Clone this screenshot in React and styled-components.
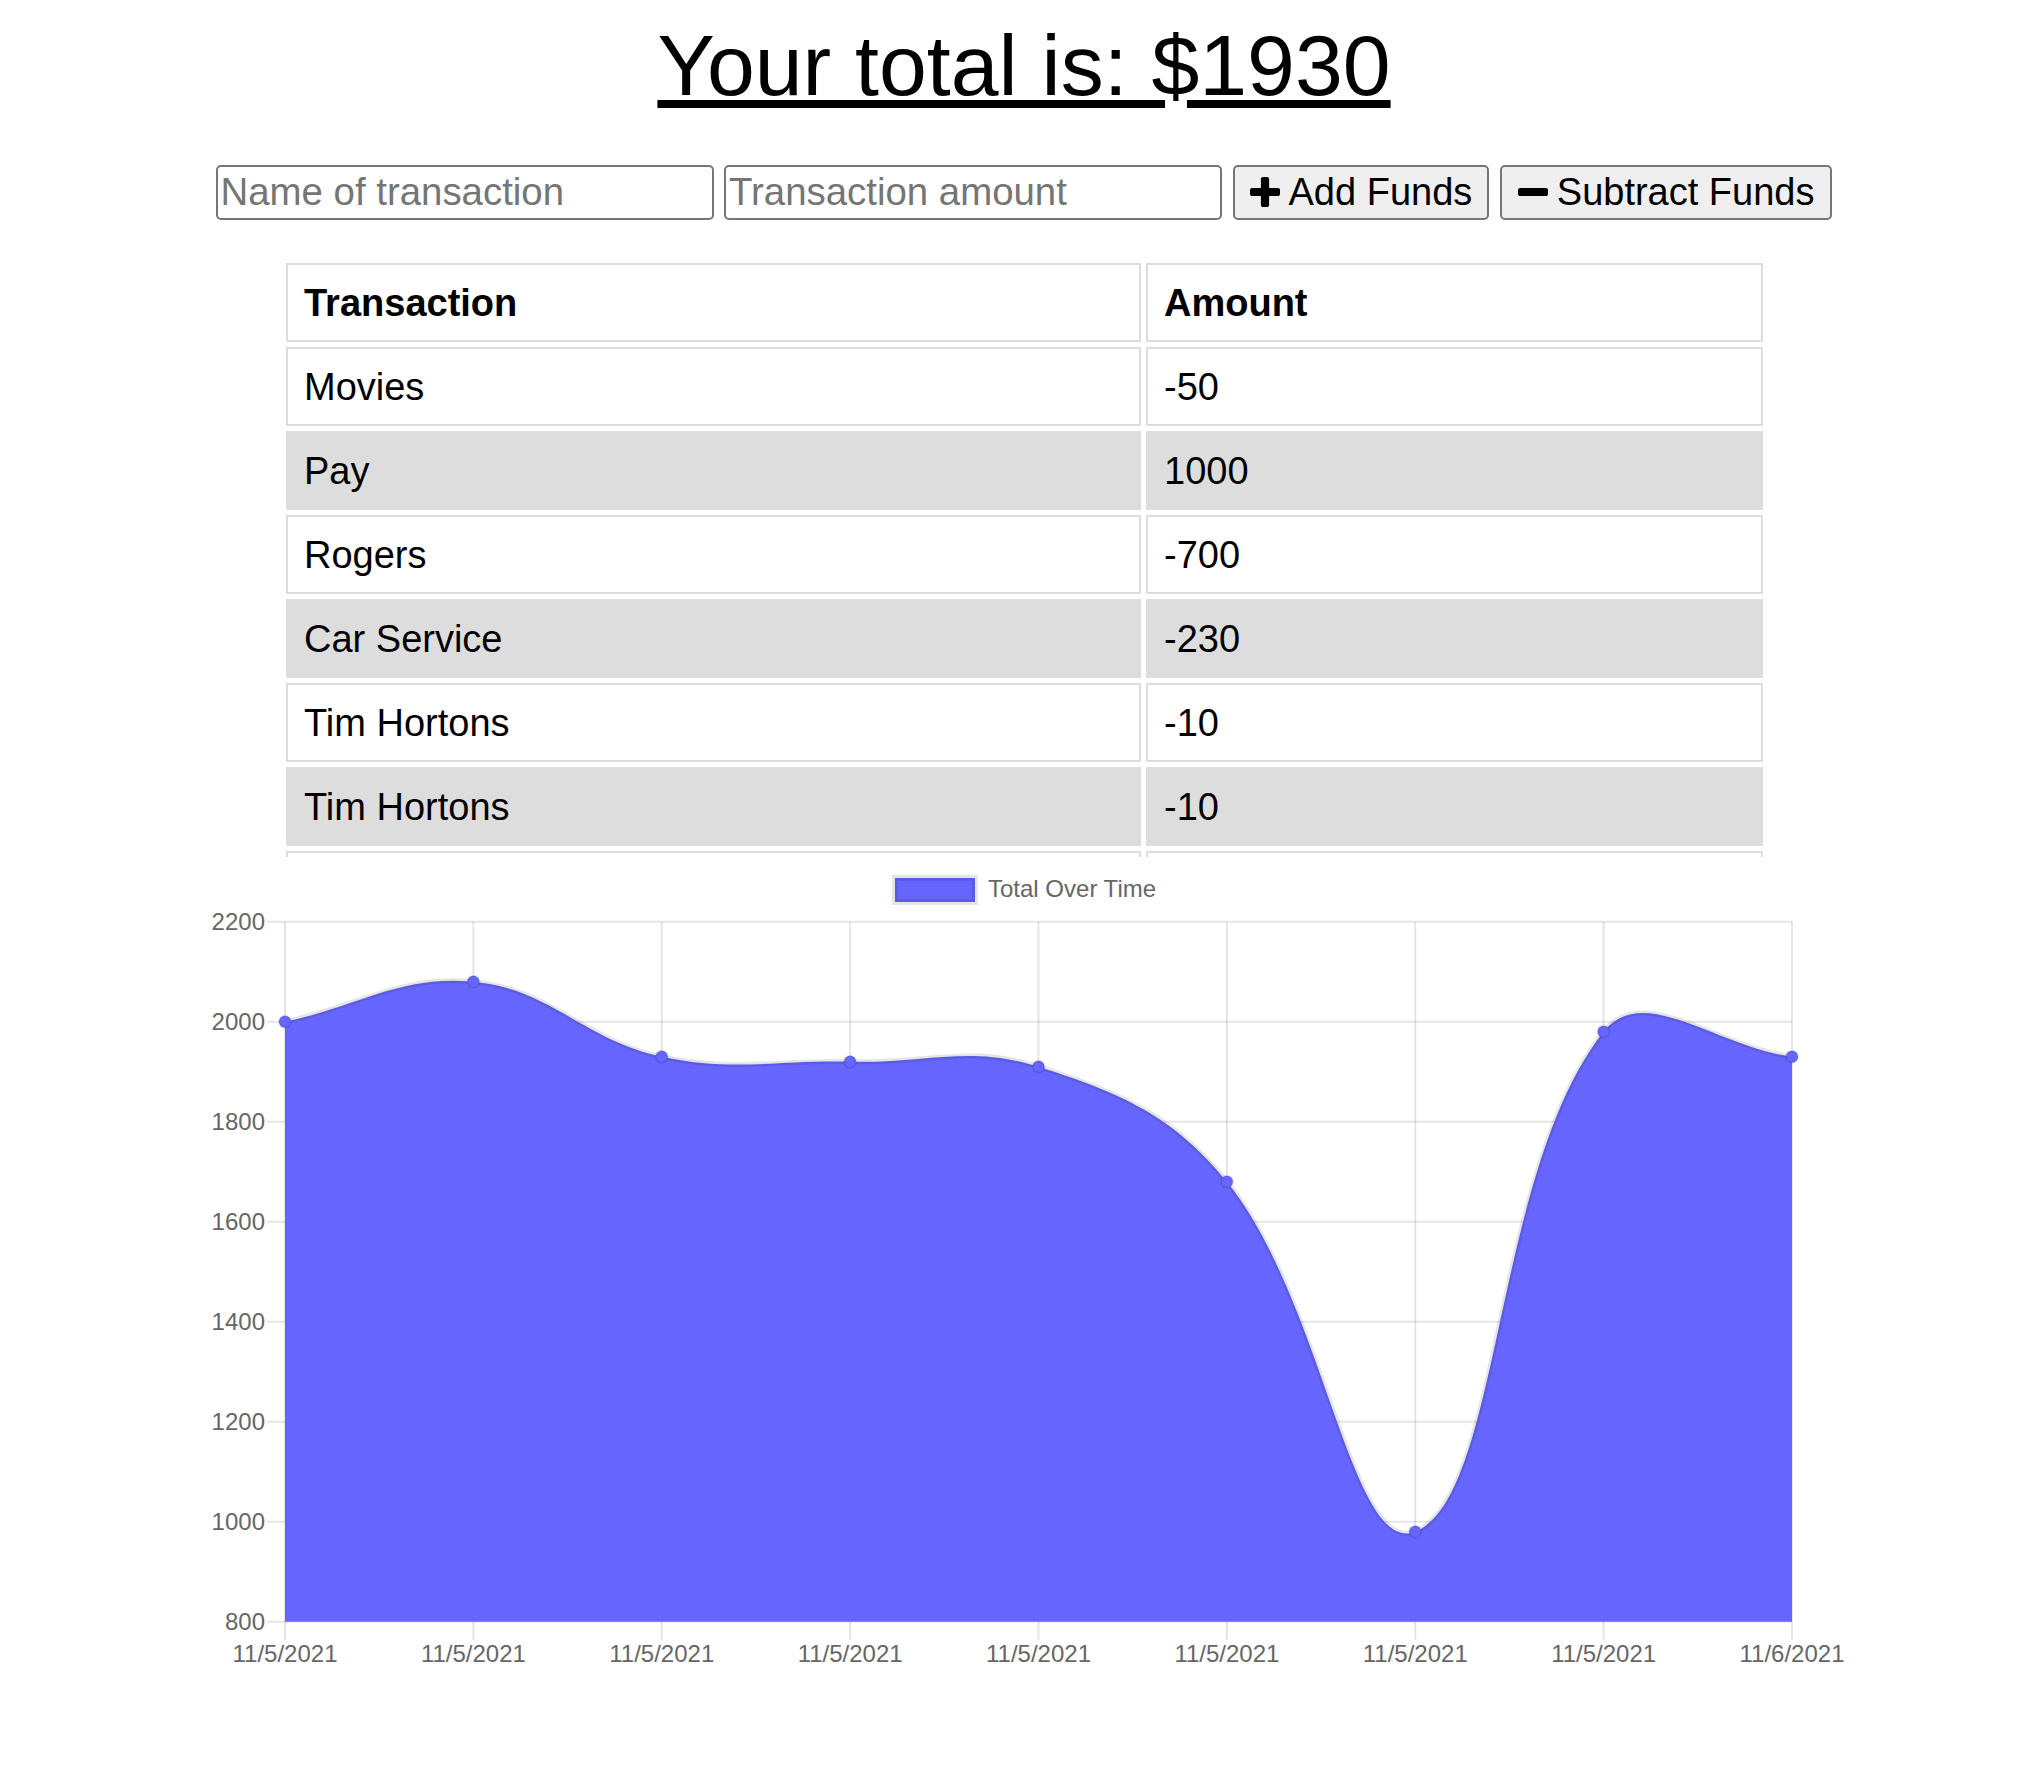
import React from 'react'
import styled, { createGlobalStyle } from 'styled-components'

const GlobalStyle = createGlobalStyle`
  * { box-sizing: border-box; }
  body {
    margin: 0;
    background: #fff;
    font-family: "Liberation Sans", Arial, sans-serif;
  }
`

const transactions = [
  { name: 'Movies', value: -50 },
  { name: 'Pay', value: 1000 },
  { name: 'Rogers', value: -700 },
  { name: 'Car Service', value: -230 },
  { name: 'Tim Hortons', value: -10 },
  { name: 'Tim Hortons', value: -10 },
  { name: 'Groceries', value: -150 },
  { name: 'Refund', value: 80 },
  { name: 'Savings', value: 2000 },
]

const VALUES = [2000, 2080, 1930, 1920, 1910, 1680, 980, 1980, 1930]
const LABELS = [...Array(8).fill('11/5/2021'), '11/6/2021']
const TICKS = [2200, 2000, 1800, 1600, 1400, 1200, 1000, 800]

// plot area, page coordinates
const LEFT = 285
const RIGHT = 1792
const TOP = 921.7
const BOTTOM = 1621.7

const xAt = (i) => LEFT + (i * (RIGHT - LEFT)) / (VALUES.length - 1)
const yAt = (v) => BOTTOM - ((v - 800) * (BOTTOM - TOP)) / 1400

const clamp = (v, a, b) => Math.max(a, Math.min(b, v))

// same spline as chart.js (tension 0.4)
function curvePath(pts, tension = 0.4) {
  const cps = pts.map((p, i) => {
    const prev = pts[i - 1] || p
    const next = pts[i + 1] || p
    const d01 = Math.hypot(p.x - prev.x, p.y - prev.y)
    const d12 = Math.hypot(next.x - p.x, next.y - p.y)
    let s01 = d01 / (d01 + d12)
    let s12 = d12 / (d01 + d12)
    if (isNaN(s01)) s01 = 0
    if (isNaN(s12)) s12 = 0
    const fa = tension * s01
    const fb = tension * s12
    return {
      prev: {
        x: clamp(p.x - fa * (next.x - prev.x), LEFT, RIGHT),
        y: clamp(p.y - fa * (next.y - prev.y), TOP, BOTTOM),
      },
      next: {
        x: clamp(p.x + fb * (next.x - prev.x), LEFT, RIGHT),
        y: clamp(p.y + fb * (next.y - prev.y), TOP, BOTTOM),
      },
    }
  })
  let d = `M${pts[0].x} ${pts[0].y}`
  for (let i = 1; i < pts.length; i++) {
    const a = cps[i - 1].next
    const b = cps[i].prev
    d += ` C${a.x} ${a.y} ${b.x} ${b.y} ${pts[i].x} ${pts[i].y}`
  }
  return d
}

function PlusIcon() {
  return (
    <Icon viewBox="0 192 1408 1408">
      <path d="M1408 800v192q0 40-28 68t-68 28h-416v416q0 40-28 68t-68 28h-192q-40 0-68-28t-28-68v-416h-416q-40 0-68-28t-28-68v-192q0-40 28-68t68-28h416v-416q0-40 28-68t68-28h192q40 0 68 28t28 68v416h416q40 0 68 28t28 68z" />
    </Icon>
  )
}

function MinusIcon() {
  return (
    <Icon viewBox="0 192 1408 1408">
      <path d="M1408 800v192q0 40-28 68t-68 28h-1216q-40 0-68-28t-28-68v-192q0-40 28-68t68-28h1216q40 0 68 28t28 68z" />
    </Icon>
  )
}

function Chart() {
  const pts = VALUES.map((v, i) => ({ x: xAt(i), y: yAt(v) }))
  const line = curvePath(pts)
  const area = `${line} L${RIGHT} ${BOTTOM} L${LEFT} ${BOTTOM} Z`

  return (
    <ChartSvg viewBox="174 857 1700 830">
      <rect x="895" y="878" width="80" height="24" fill="#6666ff" stroke="rgba(0,0,0,0.1)" strokeWidth="6" />
      <text x="988" y="897">Total Over Time</text>

      {TICKS.map((t) => (
        <g key={t}>
          <line x1={LEFT - 18} x2={RIGHT} y1={yAt(t)} y2={yAt(t)} stroke="rgba(0,0,0,0.1)" strokeWidth="2" />
          <text x="265" y={yAt(t) + 8} textAnchor="end">{t}</text>
        </g>
      ))}
      {LABELS.map((l, i) => (
        <g key={i}>
          <line x1={xAt(i)} x2={xAt(i)} y1={TOP} y2={BOTTOM + 18} stroke="rgba(0,0,0,0.1)" strokeWidth="2" />
          <text x={xAt(i)} y="1662" textAnchor="middle">{l}</text>
        </g>
      ))}

      <path d={area} fill="#6666ff" />
      <path d={line} fill="none" stroke="rgba(0,0,0,0.1)" strokeWidth="5" />
      {pts.map((p, i) => (
        <circle key={i} cx={p.x} cy={p.y} r="6" fill="#6666ff" stroke="rgba(0,0,0,0.1)" strokeWidth="2" />
      ))}
    </ChartSvg>
  )
}

export default function App() {
  return (
    <Page>
      <GlobalStyle />
      <Total>Your total is: $1930</Total>

      <Form>
        <TextInput type="text" placeholder="Name of transaction" />
        <TextInput type="number" placeholder="Transaction amount" />
        <FundsButton $pad={15}>
          <PlusIcon />
          Add Funds
        </FundsButton>
        <FundsButton $pad={16}>
          <MinusIcon />
          Subtract Funds
        </FundsButton>
      </Form>

      <TableWrap>
        <Table>
          <thead>
            <tr>
              <Th $wide>Transaction</Th>
              <Th>Amount</Th>
            </tr>
          </thead>
          <tbody>
            {transactions.map((t, i) => (
              <Row key={i}>
                <Td>{t.name}</Td>
                <Td>{t.value}</Td>
              </Row>
            ))}
          </tbody>
        </Table>
      </TableWrap>

      <Chart />
    </Page>
  )
}

const Page = styled.div`
  padding-left: 11px;
  color: #000;
`

const Total = styled.h1`
  margin: 16px 0 0;
  font-size: 86px;
  font-weight: normal;
  line-height: normal;
  text-align: center;
  text-decoration: underline;
`

const Form = styled.div`
  margin-top: 49.5px;
  display: flex;
  justify-content: center;
  gap: 10.5px;
`

const TextInput = styled.input`
  width: 498px;
  height: 55px;
  padding: 0 3px;
  border: 2px solid #767676;
  border-radius: 5px;
  font-family: "Liberation Sans", Arial, sans-serif;
  font-size: 38.4px;
  color: #000;
  background: #fff;

  &::placeholder {
    color: #757575;
  }
`

const FundsButton = styled.button`
  height: 55px;
  padding: 0 ${(p) => p.$pad}px;
  display: inline-flex;
  align-items: center;
  gap: 9px;
  border: 2px solid #767676;
  border-radius: 5px;
  background: #efefef;
  color: #000;
  font-family: "Liberation Sans", Arial, sans-serif;
  font-size: 38px;
  cursor: pointer;
`

const Icon = styled.svg`
  width: 30px;
  height: 30px;
  fill: #000;
  flex-shrink: 0;
`

const TableWrap = styled.div`
  width: 1487px;
  height: 599px;
  margin: 38.5px auto 0;
  overflow: hidden;
`

const Table = styled.table`
  width: 100%;
  table-layout: fixed;
  border-collapse: separate;
  border-spacing: 5px;
  font-size: 38px;
`

const Th = styled.th`
  width: ${(p) => (p.$wide ? '855px' : 'auto')};
  padding: 15.5px 16.5px;
  border: 2px solid #ddd;
  line-height: 44px;
  text-align: left;
  font-weight: bold;
`

const Row = styled.tr`
  &:nth-child(even) td {
    background: #ddd;
  }
`

const Td = styled.td`
  padding: 15.5px 16.5px;
  border: 2px solid #ddd;
  line-height: 44px;
  background: #fff;
`

const ChartSvg = styled.svg`
  display: block;
  width: 1700px;
  height: 830px;
  margin: 0 auto;

  text {
    font-family: "Liberation Sans", Arial, sans-serif;
    font-size: 24px;
    fill: #666;
  }
`
